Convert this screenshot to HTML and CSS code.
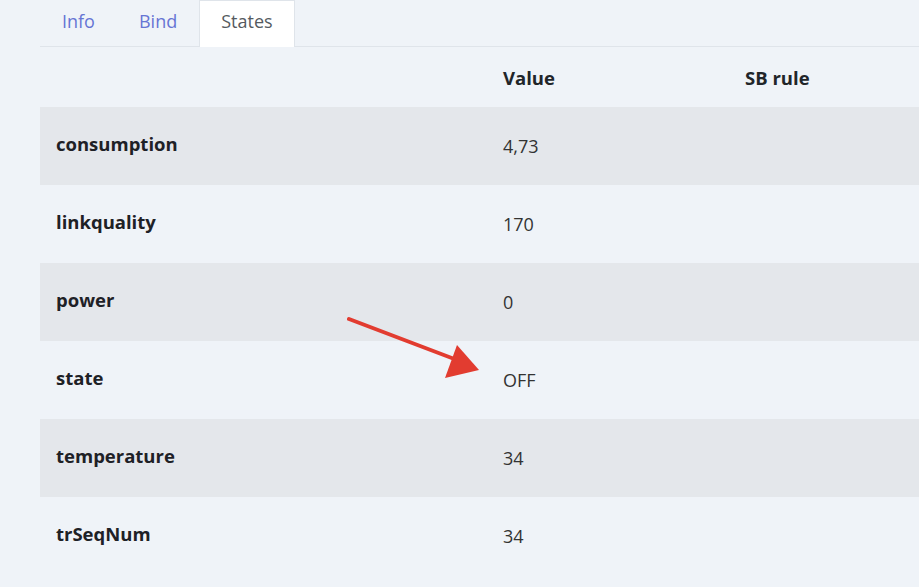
FILE: index.html
```html
<!DOCTYPE html>
<html lang="en">
<head>
    <meta charset="UTF-8">
    <title>Device states</title>
    <link rel="stylesheet" href="styles.css">
</head>
<body>
    <div class="panel">
        <ul class="tabs">
            <li><a href="#">Info</a></li>
            <li><a href="#">Bind</a></li>
            <li class="active"><a href="#">States</a></li>
        </ul>

        <div class="table-wrap">
            <table class="states">
                <thead>
                    <tr>
                        <th class="col-name"></th>
                        <th class="col-value">Value</th>
                        <th class="col-rule">SB rule</th>
                    </tr>
                </thead>
                <tbody>
                    <tr><td class="name">consumption</td><td>4,73</td><td></td></tr>
                    <tr><td class="name">linkquality</td><td>170</td><td></td></tr>
                    <tr><td class="name">power</td><td>0</td><td></td></tr>
                    <tr><td class="name">state</td><td>OFF</td><td></td></tr>
                    <tr><td class="name">temperature</td><td>34</td><td></td></tr>
                    <tr><td class="name">trSeqNum</td><td>34</td><td></td></tr>
                </tbody>
            </table>

            <!-- annotation arrow -->
            <svg class="arrow" width="140" height="70" viewBox="0 0 140 70">
                <line x1="2" y1="3" x2="110" y2="44" stroke="#e23c30" stroke-width="4" stroke-linecap="round"/>
                <polygon points="132,54 98,62 110,29" fill="#e23c30"/>
            </svg>
        </div>
    </div>
</body>
</html>
```

FILE: styles.css
```css
body {
    margin: 0;
    padding: 0;
    background-color: #eff3f8;
    font-family: "Open Sans", "Noto Sans", Arial, sans-serif;
    color: #212529;
}

.panel {
    padding-left: 40px;
}

.tabs {
    display: flex;
    list-style: none;
    margin: 0;
    padding: 0;
    border-bottom: 1px solid #dfe4ea;
}
.tabs li {
    margin-bottom: -1px;
}
.tabs a {
    display: block;
    height: 46px;
    box-sizing: border-box;
    padding: 8px 21px 0;
    font-size: 18px;
    color: #6675d4;
    text-decoration: none;
    border: 1px solid transparent;
    border-bottom: none;
}
.tabs li.active a {
    background-color: #ffffff;
    color: #555a60;
    border-color: #dfe4ea;
    height: 47px;
}

.table-wrap {
    position: relative;
}

.states {
    width: 100%;
    border-collapse: collapse;
    font-size: 18px;
}
.states th {
    height: 60px;
    text-align: left;
    font-weight: 700;
    font-size: 18.5px;
    padding: 0 16px;
    vertical-align: middle;
}
.states td {
    height: 78px;
    padding: 0 16px;
    vertical-align: middle;
    color: #333;
}
.states td.name {
    height: 72px;
    font-weight: 700;
    font-size: 18.5px;
    color: #1e2126;
    padding-bottom: 6px;
}
.states tbody tr:nth-child(odd) {
    background-color: #e4e7eb;
}
.col-name {
    width: 415px;
}
.col-value {
    width: 210px;
}

.arrow {
    position: absolute;
    left: 307px;
    top: 269px;
}
```
